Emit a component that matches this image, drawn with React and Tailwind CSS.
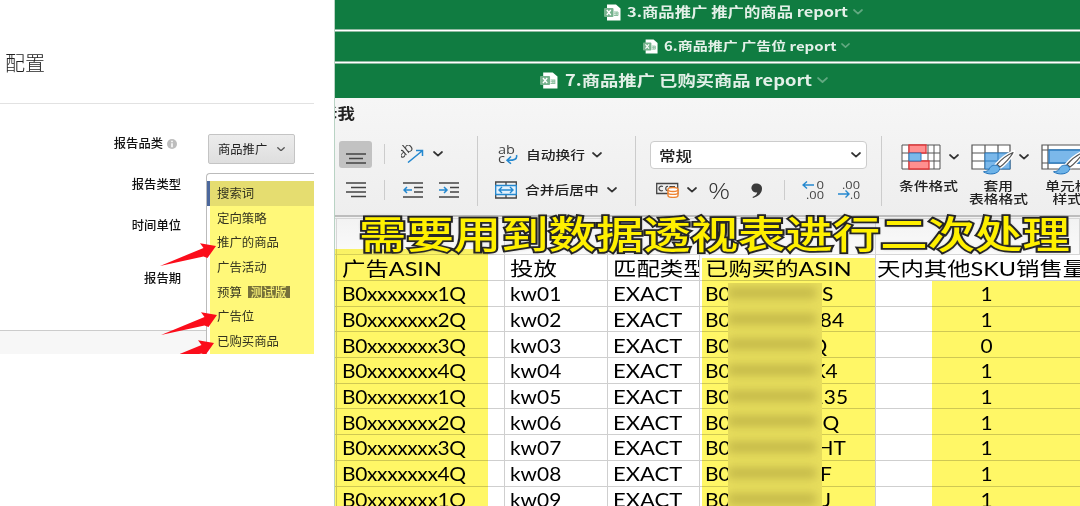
import clsx from "clsx"

const font = "font-['Noto_Sans_CJK_SC',sans-serif]"

const titles = [
  {
    text: "3.商品推广 推广的商品 report",
    bar: "h-[29px] pl-[269px] pb-[5px]",
    icon: "w-[17px] h-[17px]",
    label: "ml-[6px] w-[221px] text-[13.65px]",
    chevron: "ml-[5px] w-[10px]",
  },
  {
    text: "6.商品推广 广告位 report",
    bar: "h-[29px] pl-[308px] pb-[1px]",
    icon: "w-[15px] h-[15px]",
    label: "ml-[6px] w-[172px] text-[12.5px]",
    chevron: "ml-[5px] w-[9px]",
  },
  {
    text: "7.商品推广 已购买商品 report",
    bar: "h-[34px] pl-[205px] pb-[2px]",
    icon: "w-[18px] h-[17px]",
    label: "ml-[7px] w-[247px] text-[15.25px]",
    chevron: "ml-[5px] w-[11px]",
  },
]

const reportTypes = ["搜索词", "定向策略", "推广的商品", "广告活动", "预算", "广告位", "已购买商品"]

// end is the width left for the readable tail of each ASIN
const rows = [
  { asin: "B0xxxxxxx1Q", kw: "kw01", tail: "S", end: 11, count: 1 },
  { asin: "B0xxxxxxx2Q", kw: "kw02", tail: "84", end: 22, count: 1 },
  { asin: "B0xxxxxxx3Q", kw: "kw03", tail: "Q", end: 5, count: 0 },
  { asin: "B0xxxxxxx4Q", kw: "kw04", tail: "K4", end: 16, count: 1 },
  { asin: "B0xxxxxxx1Q", kw: "kw05", tail: "135", end: 26, count: 1 },
  { asin: "B0xxxxxxx2Q", kw: "kw06", tail: "Q", end: 17, count: 1 },
  { asin: "B0xxxxxxx3Q", kw: "kw07", tail: "HT", end: 24, count: 1 },
  { asin: "B0xxxxxxx4Q", kw: "kw08", tail: "F", end: 10, count: 1 },
  { asin: "B0xxxxxxx1Q", kw: "kw09", tail: "J", end: 9, count: 1 },
]

function Wide({ className, children }) {
  return (
    <span className={clsx("inline-block whitespace-nowrap", className || "origin-left scale-x-[1.2]")}>
      {children}
    </span>
  )
}

function Chevron({ className }) {
  return (
    <svg viewBox="0 0 10 6" className={clsx("shrink-0 fill-none stroke-[1.7]", className)}>
      <path d="M1 1l4 3.6L9 1" strokeLinecap="round" strokeLinejoin="round" />
    </svg>
  )
}

function FileIcon({ className }) {
  return (
    <svg viewBox="0 0 17 17" preserveAspectRatio="none" className={clsx("shrink-0", className)}>
      <path d="M3 .5h9l4.500 4V16.500H3z" fill="#fff" />
      <path d="M10 8h4v3.500h-4M12.200 8v3.500M10 9.800h4" stroke="#8cc0a0" strokeWidth="1" fill="none" />
      <rect x="0" y="4" width="9.500" height="9" rx="1" fill="#76b28d" />
      <path d="M2.800 6l4 5M6.800 6l-4 5" stroke="#fff" strokeWidth="1.300" />
    </svg>
  )
}

function Arrow({ className }) {
  return (
    <svg viewBox="0 0 58 24" className={clsx("absolute h-6 w-[58px]", className)}>
      <path d="M57 3L41 .3l3.500 4.700L1 22.900 44.500 13.500 48.500 15z" fill="#fb0d1b" />
    </svg>
  )
}

function FieldLabel({ className, children }) {
  return <div className={clsx("text-right text-[12.3px] leading-4 font-medium text-[#111]", className)}>{children}</div>
}

function ConfigPanel() {
  return (
    <div className="relative h-[354px] w-[314px] overflow-hidden bg-white">
      <h1 className="h-[103px] pt-[48px] pl-[5px] text-[20px] leading-[30px] font-light text-[#222]">配置</h1>
      <div className="h-px bg-[#e2e2e2]" />
      <div className="flex h-[226px]">
        <div className="w-[206px] shrink-0 pt-[31px]">
          <div className="flex items-center">
            <FieldLabel className="w-[163px]">报告品类</FieldLabel>
            <svg viewBox="0 0 10 10" className="mt-[2px] ml-[4px] size-[10px]">
              <circle cx="5" cy="5" r="5" fill="#bdbdbd" />
              <path d="M5 1.800v1.500M5 4.300v4" stroke="#fff" strokeWidth="1.500" />
            </svg>
          </div>
          <FieldLabel className="mt-[25px] w-[181px]">报告类型</FieldLabel>
          <FieldLabel className="mt-[25px] w-[181px]">时间单位</FieldLabel>
          <FieldLabel className="mt-[37px] w-[181px]">报告期</FieldLabel>
        </div>
        <div className="min-w-0 flex-1 pt-[30px]">
          <div className="ml-[2px] flex h-[30px] w-[87px] items-center rounded-[2px] border border-[#c4c4c4] bg-linear-to-b from-[#ececec] to-[#dedede] pl-[9px] text-[12.3px] text-[#222]">
            商品推广
            <Chevron className="ml-[10px] w-[8px] stroke-[#555] stroke-2" />
          </div>
          <div className="mt-[9px] h-[182px] rounded-tl-[4px] border-t border-l border-[#bbb] bg-white pt-[7px]">
            <div className="flex flex-col bg-[#fff879]">
              {reportTypes.map((type, i) => (
                <div
                  key={type}
                  className={clsx(
                    "flex h-[24.700px] items-center border-l-[3px] pl-[7px] text-[12.4px] text-[#33331f]",
                    i === 0 ? "border-[#4c689c] bg-[#e5dd70]" : "border-white",
                  )}
                >
                  {type}
                  {type === "预算" && (
                    <span className="ml-[6px] flex h-[12px] w-[42px] items-center justify-center bg-[#77713a] text-[12px] leading-none font-medium text-[#f7ef75]">
                      测试版
                    </span>
                  )}
                </div>
              ))}
            </div>
          </div>
        </div>
      </div>
      <div className="h-6 w-[206px] border-t border-[#ccc] bg-[#f7f7f7]" />
      <Arrow className="top-[243px] left-[159px]" />
      <Arrow className="top-[312px] left-[160px]" />
      <Arrow className="top-[340px] left-[157px]" />
    </div>
  )
}

function TitleBar({ title }) {
  return (
    <div className={clsx("flex items-center bg-[#107c41] text-[#e3f0e8]", title.bar)}>
      <FileIcon className={title.icon} />
      <div className={clsx("shrink-0 leading-none font-bold", title.label)}>
        <Wide>{title.text}</Wide>
      </div>
      <Chevron className={clsx("stroke-[#62a981] stroke-[1.3]", title.chevron)} />
    </div>
  )
}

function LinesIcon({ d, className }) {
  return (
    <svg viewBox="0 0 20 16" className={clsx("h-4 w-5 shrink-0 fill-none stroke-[#444] stroke-[1.4]", className)}>
      <path d={d} />
    </svg>
  )
}

function IndentIcon({ flip, className }) {
  return (
    <svg viewBox="0 0 20 16" className={clsx("h-4 w-5 shrink-0 fill-none stroke-[#444] stroke-[1.4]", className)}>
      <path d="M0 1h20M11 5.500h9M11 10h9M0 15h20" />
      <path d={flip ? "M0 8h8M5 5l3 3-3 3" : "M9 8H1M4 5L1 8l3 3"} stroke="#2488cf" strokeWidth="1.500" />
    </svg>
  )
}

function Brush() {
  return (
    <>
      <path d="M42 8.500C36 11 29 17 26 20.500l3 2.500c4-3 11-10 13-14.500z" fill="#fff" stroke="#fff" strokeWidth="4" />
      <path d="M42 8.500C36 11 29 17 26 20.500l3 2.500c4-3 11-10 13-14.500z" fill="#fff" stroke="#555" strokeWidth="1.200" strokeLinejoin="round" />
      <path d="M26.500 21.500c-4-1-7 .5-8 3-1 2.500-3 3-6 3.300 5 3.500 15 3 16.500-3.300z" fill="#6db3e8" stroke="#2474bb" strokeWidth="1" />
    </>
  )
}

function ConditionalIcon() {
  return (
    <svg viewBox="0 0 40 26" className="h-[26px] w-10 shrink-0 fill-none">
      <path d="M1 1h38v24H1zM1 9h38M1 17h38M8 1v24M27 1v24M33 1v24" fill="#fff" stroke="#555" />
      <path d="M8 1h17v8H8zM8 17h20v8H8z" fill="#ff8f8f" stroke="#e0383b" strokeWidth="1.300" />
      <path d="M8 9h12v8H8z" fill="#7bb8ea" stroke="#2d7cc0" />
    </svg>
  )
}

function TableStyleIcon() {
  return (
    <svg viewBox="0 0 44 31" className="h-[31px] w-11 shrink-0 fill-none">
      <path d="M1 1h38v24H1zM1 9h38M1 17h38M14 1v24M27 1v24" fill="#fff" stroke="#555" strokeWidth="1.200" />
      <path d="M14 9h25v16H14zM27 9v16M14 17h25" fill="#7bb8ea" stroke="#2d7cc0" />
      <Brush />
    </svg>
  )
}

function CellStyleIcon() {
  return (
    <svg viewBox="0 0 44 31" className="h-[31px] w-11 shrink-0 fill-none">
      <path d="M1 1h42v24H1zM1 6h42M1 19h42M7 1v24" fill="#fff" stroke="#555" strokeWidth="1.200" />
      <path d="M8 6h35v13H8z" fill="#7bb8ea" stroke="#2d7cc0" strokeWidth="1.300" />
      <Brush />
    </svg>
  )
}

function DecimalIcon({ increase, className }) {
  return (
    <svg viewBox="0 0 22 20" className={clsx("h-5 w-[22px] shrink-0 fill-[#444] font-['Open_Sans',sans-serif]", className)}>
      <text x={increase ? 14.5 : 4} y="9" fontSize="11.500" lengthAdjust="spacingAndGlyphs" textLength={increase ? 7.5 : 18}>
        {increase ? "0" : ".00"}
      </text>
      <text x={increase ? 4 : 12} y="18.500" fontSize="11.500" lengthAdjust="spacingAndGlyphs" textLength={increase ? 18 : 10}>
        {increase ? ".00" : ".0"}
      </text>
      <path d={increase ? "M12 5H1M5 1.500L1 5l4 3.500" : "M0 14h11M7.500 10.500L11 14l-3.500 3.500"} fill="none" stroke="#2488cf" strokeWidth="1.400" />
    </svg>
  )
}

const dark = "stroke-[#333]"

function Ribbon() {
  return (
    <div className="h-[117px] overflow-hidden bg-linear-to-b from-[#f6f6f6] to-[#eeeeee] text-[#222]">
      <div className="flex h-[38px] items-start overflow-hidden pt-[7px] text-[14.5px] leading-4 font-bold">
        <Wide className="-ml-[15.500px] origin-left scale-x-[1.2]">诉我</Wide>
      </div>
      <div className="-ml-px flex h-[70px]">
        <div className="w-[144px] shrink-0 border-r border-[#ccc]">
          <div className="flex h-9 items-center pl-[5px]">
            <div className="mt-[1px] flex h-[27px] w-[33px] items-center justify-center rounded-[3px] bg-[#c2c2c2]">
              <LinesIcon d="M0 4h20M3 8.500h14M0 13h20" className="mt-[6px]" />
            </div>
            <div className="ml-[12px] h-5 w-px bg-[#ccc]" />
            <svg viewBox="0 0 24 18" className="ml-[16px] h-[18px] w-6 shrink-0 fill-[#444]">
              <text x="0" y="12" fontSize="14" transform="rotate(-40 3 12)" className="font-['Open_Sans',sans-serif]">
                ab
              </text>
              <path d="M7 17.500L21 6M15 5.500h6.500v5.500" fill="none" stroke="#2488cf" strokeWidth="1.500" />
            </svg>
            <Chevron className={clsx("ml-[8px] w-[10px]", dark)} />
          </div>
          <div className="flex h-9 items-center pl-[12px]">
            <LinesIcon d="M0 1h20M5 5.500h15M0 10h20M5 14.500h15" />
            <div className="ml-[18px] h-5 w-px bg-[#ccc]" />
            <IndentIcon className="ml-[18px]" />
            <IndentIcon flip className="ml-[16px]" />
          </div>
        </div>
        <div className="w-[158px] shrink-0 border-r border-[#ccc] text-[12.3px]">
          <div className="flex h-9 items-center pt-[2px] pl-[20px]">
            <svg viewBox="0 0 20 20" className="h-5 w-5 shrink-0 fill-[#444] font-['Open_Sans',sans-serif]">
              <text x="0" y="9" fontSize="12" lengthAdjust="spacingAndGlyphs" textLength="17">ab</text>
              <text x="0" y="18" fontSize="12" lengthAdjust="spacingAndGlyphs" textLength="7">c</text>
              <path d="M18.500 10c1 4-2 5.500-9 5.300M13 11.500l-4 3.800 4 3.500" fill="none" stroke="#2488cf" strokeWidth="1.500" />
            </svg>
            <div className="ml-[8px] w-[66px] font-medium">
              <Wide>自动换行</Wide>
            </div>
            <Chevron className={clsx("w-[10px]", dark)} />
          </div>
          <div className="flex h-9 items-center pl-[17px]">
            <svg viewBox="0 0 22 18" className="h-[18px] w-[22px] shrink-0 fill-none">
              <path d="M.7 1h20.600v16H.7zM11 1v4M11 13v4" stroke="#444" strokeWidth="1.300" />
              <path d="M.7 4.500h20.600v9H.7z" fill="#e3f2fd" stroke="#2488cf" strokeWidth="1.300" />
              <path d="M4 9h14M7 6L4 9l3 3M15 6l3 3-3 3" stroke="#2488cf" strokeWidth="1.400" />
            </svg>
            <div className="ml-[8px] w-[82px] font-medium">
              <Wide>合并后居中</Wide>
            </div>
            <Chevron className={clsx("w-[10px]", dark)} />
          </div>
        </div>
        <div className="w-[246px] shrink-0 border-r border-[#ccc] pl-[14px]">
          <div className="mt-[5px] flex h-[28px] w-[217px] items-center rounded-[4px] border border-[#ccc] bg-white pr-[5px] pl-[8px] text-[13.8px] font-medium">
            <Wide>常规</Wide>
            <Chevron className={clsx("ml-auto w-[10px]", dark)} />
          </div>
          <div className="mt-[3px] flex h-9 items-center pl-[6px]">
            <svg viewBox="0 0 23 16" className="h-4 w-[23px] shrink-0 fill-none">
              <path d="M.7 1.500h21v10H.7z" stroke="#444" strokeWidth="1.300" />
              <path d="M7 4.500c-3-1-4 1-4 2s1 3 4 2M12 4.500c-3-1-3 5 0 4M14 7V4.500h5" stroke="#444" strokeWidth="1.200" />
              <path d="M12 7.500v6c0 2.500 10 2.500 10 0v-6" fill="#fff" stroke="#ee8433" strokeWidth="1.400" />
              <ellipse cx="17" cy="7.500" rx="5" ry="2" fill="#fff" stroke="#ee8433" strokeWidth="1.400" />
              <path d="M12 10.500c0 2.500 10 2.500 10 0" stroke="#ee8433" strokeWidth="1.400" />
            </svg>
            <Chevron className={clsx("ml-[8px] w-[10px]", dark)} />
            <div className="ml-[11px] w-[43px] font-['Open_Sans',sans-serif] text-[22px] leading-none font-light text-[#333]">
              <Wide className="origin-left scale-x-[1.25]">%</Wide>
            </div>
            <svg viewBox="0 0 11 15" className="h-[15px] w-[11px] shrink-0">
              <path d="M5 .5a4.500 4.500 0 1 0 1.200 8.800C6 11.500 4.500 13 1.500 14l.5 1C7.500 13.500 11 10 11 5.500 11 2 8.500.5 5 .5z" fill="#3b3b3b" />
            </svg>
            <div className="ml-[22px] h-5 w-px bg-[#ccc]" />
            <DecimalIcon increase className="ml-[17px]" />
            <DecimalIcon className="ml-[14px]" />
          </div>
        </div>
        <div className="flex min-w-0 flex-1 overflow-hidden pt-[8px] pl-[19px] text-[12.3px] leading-[13px] font-medium">
          <div className="w-[70px] shrink-0">
            <div className="flex h-[36px]">
              <ConditionalIcon />
              <Chevron className={clsx("mt-[10px] ml-[8px] h-[6px] w-[10px]", dark)} />
            </div>
            <Wide className="-ml-[2px] origin-left scale-x-[1.2]">条件格式</Wide>
          </div>
          <div className="w-[70px] shrink-0">
            <div className="flex h-[36px]">
              <TableStyleIcon />
              <Chevron className={clsx("mt-[10px] ml-[4px] h-[6px] w-[10px]", dark)} />
            </div>
            <div className="flex w-[55px] flex-col items-center">
              <Wide className="scale-x-[1.2]">套用</Wide>
              <Wide className="scale-x-[1.2]">表格格式</Wide>
            </div>
          </div>
          <div className="w-[56px] shrink-0">
            <div className="flex h-[36px]">
              <CellStyleIcon />
            </div>
            <div className="flex w-[52px] flex-col items-center">
              <Wide className="scale-x-[1.2]">单元格</Wide>
              <Wide className="scale-x-[1.2]">样式</Wide>
            </div>
          </div>
        </div>
      </div>
    </div>
  )
}

const cols = "grid grid-cols-[2px_168px_103px_92px_176px_204px]"
const cell = "flex items-center overflow-hidden border-r border-b border-[#cfcfcf]"
const lastCell = "flex items-center overflow-hidden border-b border-[#cfcfcf]"
const latin = "font-['Lato','Noto_Sans_CJK_SC',sans-serif]"
const narrow = "origin-left scale-x-[1.1]"

function Sheet() {
  return (
    <div className="relative h-[291px] overflow-hidden border-t-2 border-[#bdbdbd] bg-white">
      <div className={clsx(cols, "h-[38px] bg-linear-to-b from-[#f2f2f2] to-[#fbfbfb]")}>
        {[0, 1, 2, 3, 4, 5].map((i) => (
          <div key={i} className="mt-px border-t border-r border-b border-[#d6d6d6]" />
        ))}
      </div>
      <div className={clsx(cols, latin, "h-[26px] text-[19.500px] leading-none text-black")}>
        <div className={cell} />
        <div className={clsx(cell, "pt-[2px] pl-[5px]")}><Wide>广告ASIN</Wide></div>
        <div className={clsx(cell, "pt-[2px] pl-[5px]")}><Wide>投放</Wide></div>
        <div className={clsx(cell, "pt-[2px] pl-[5px]")}><Wide>匹配类型</Wide></div>
        <div className={clsx(cell, "pt-[2px] pl-[5px]")}><Wide>已购买的ASIN</Wide></div>
        <div className={clsx(lastCell, "pt-[2px] pl-[1px]")}><Wide>天内其他SKU销售量</Wide></div>
      </div>
      {rows.map((row) => (
        <div key={row.kw} className={clsx(cols, latin, "h-[25.700px] text-[19px] leading-none text-black")}>
          <div className={cell} />
          <div className={clsx(cell, "pt-px pl-[5px]")}>
            <Wide className="origin-left scale-x-[1.1] tracking-[-0.3px]">{row.asin}</Wide>
          </div>
          <div className={clsx(cell, "pt-px pl-[5px]")}><Wide className={narrow}>{row.kw}</Wide></div>
          <div className={clsx(cell, "pt-px pl-[5px]")}>
            <Wide className="origin-left scale-x-[1.16]">EXACT</Wide>
          </div>
          <div className={clsx(cell, "pt-px pl-[5px]")}>
            <div className="w-[117px] shrink-0"><Wide className={narrow}>B0</Wide></div>
            <div className="flex h-full shrink-0 items-center justify-end overflow-hidden" style={{ width: row.end }}>
              <Wide className="origin-right scale-x-[1.1]">{row.tail}</Wide>
            </div>
          </div>
          <div className={clsx(lastCell, "justify-center pt-px pl-[18px]")}>
            <Wide className="scale-x-[1.1]">{row.count}</Wide>
          </div>
        </div>
      ))}

      {/* marker pen over the columns that matter */}
      <div className="absolute top-[32px] left-0 h-[260px] w-[153px] bg-[#fff766] mix-blend-multiply" />
      <div className="absolute top-[41px] left-[367px] h-[250px] w-[173px] bg-[#fff766] mix-blend-multiply" />
      <div className="absolute top-[64px] left-[597px] h-[228px] w-[148px] bg-[#fff766] mix-blend-multiply" />

      {/* smeared middle of the ASINs */}
      <div className="absolute top-[66px] left-[393px] h-[226px] w-[94px] overflow-hidden bg-[#e8de5d]">
        {rows.map((row) => (
          <div key={row.kw} className="h-[25.700px] pt-[4px]">
            <div className="h-[12px] w-[88px] bg-[#a39836]/50 blur-[5px]" />
          </div>
        ))}
      </div>
    </div>
  )
}

export default function App() {
  return (
    <div className={clsx("relative flex h-[506px] w-[1080px] overflow-hidden bg-white", font)}>
      <ConfigPanel />
      <div className="ml-[20px] flex w-[746px] flex-col border-l border-[#b9d3c4]">
        <TitleBar title={titles[0]} />
        <div className="h-[3px] border-y border-[#8fb8a0] bg-white" />
        <TitleBar title={titles[1]} />
        <div className="h-[3px] border-y border-[#8fb8a0] bg-white" />
        <TitleBar title={titles[2]} />
        <Ribbon />
        <Sheet />
      </div>
      <div className="absolute top-[208px] left-[359px] origin-left scale-x-[1.247] text-[38px] leading-[48px] font-medium whitespace-nowrap text-[#fff000] [-webkit-text-stroke:3.5px_#222] [paint-order:stroke_fill] [text-shadow:0_0_3px_#333]">
        需要用到数据透视表进行二次处理
      </div>
    </div>
  )
}
